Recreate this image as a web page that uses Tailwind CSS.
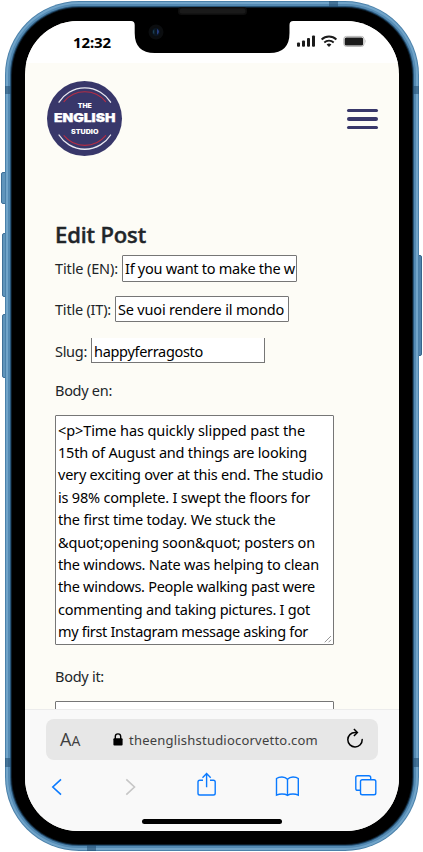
<!DOCTYPE html>
<html lang="en">
<head>
<meta charset="utf-8">
<meta name="viewport" content="width=device-width">
<title>Edit Post</title>
<script src="https://cdn.jsdelivr.net/npm/@tailwindcss/browser@4"></script>
</head>
<body class="bg-white w-[423px] h-[852px] overflow-hidden font-['Noto_Sans',sans-serif]">
<div class="relative w-[423px] h-[852px] pl-[5px] pt-px">
  <!-- side buttons -->
  <div class="absolute left-[1px] top-[172px] w-[6px] h-[32px] rounded-l-[2px] bg-[#5f94bb] border border-[#3f7098]"></div>
  <div class="absolute left-[2px] top-[233px] w-[5px] h-[64px] rounded-l-[2px] bg-[#5f94bb] border border-[#3f7098]"></div>
  <div class="absolute left-[2px] top-[314px] w-[5px] h-[64px] rounded-l-[2px] bg-[#5f94bb] border border-[#3f7098]"></div>
  <div class="absolute left-[417px] top-[255px] w-[5px] h-[101px] rounded-r-[2px] bg-[#4f83ac] border border-[#37658b]"></div>

  <!-- metal frame -->
  <div class="relative w-[414px] h-[850px] rounded-[74px] bg-[#4b81aa] p-px">
    <div class="w-full h-full rounded-[73px] bg-[#71a4c9] p-[2px]">
      <div class="w-full h-full rounded-[71px] bg-[#548ab3] p-[2px]">
        <div class="w-full h-full rounded-[69px] bg-[#29567a] p-px">
          <div class="w-full h-full rounded-[68px] bg-[#0b1b28] p-px">
            <div class="w-full h-full rounded-[67px] bg-black px-[13px] pt-[13px] pb-[13px]">
              <!-- screen -->
              <div class="w-[374px] h-[810px] rounded-[53px] overflow-hidden bg-[#fdfcf6] flex flex-col">
                <!-- status bar -->
                <header class="h-[42px] shrink-0 bg-white flex items-start pl-[48px]">
                  <span class="w-[38px] mt-[11px] text-[15px] leading-[20px] font-bold text-black whitespace-nowrap"><span class="fit" data-w="38">12:32</span></span>
                  <svg class="ml-[185px] mt-[13px] w-[71px] h-[14px] shrink-0" viewBox="0 0 71 14">
                    <g fill="#1b1b1b">
                      <rect x="1" y="8.5" width="3" height="4.2" rx="1"/>
                      <rect x="6" y="6.5" width="3" height="6.2" rx="1"/>
                      <rect x="11" y="4" width="3" height="8.7" rx="1"/>
                      <rect x="16" y="1.5" width="3" height="11.2" rx="1"/>
                      <path d="M30.6 10.4 L33 12.9 L35.4 10.4 Q33 8.5 30.6 10.4z"/>
                      <rect x="48.6" y="3.4" width="18.5" height="8" rx="1.5"/>
                    </g>
                    <g fill="none" stroke="#1b1b1b" stroke-width="1.8">
                      <path d="M25.6 5.5a10.6 10.6 0 0 1 14.8 0"/>
                      <path d="M28.3 8.5a6.8 6.8 0 0 1 9.4 0"/>
                    </g>
                    <rect x="47.8" y="2.4" width="20.2" height="10" rx="2.6" fill="none" stroke="#b5b5b5"/>
                    <path d="M69 5.3q1.5 2.1 0 4.2z" fill="#b5b5b5"/>
                  </svg>
                </header>

                <!-- page -->
                <main class="h-[646px] shrink-0 overflow-hidden">
                  <div class="flex justify-between pl-[22px] pr-[21px] pt-[18px]">
                    <svg class="w-[76px] h-[76px]" viewBox="0 0 76 76">
                      <circle cx="37.5" cy="37.5" r="37.5" fill="#38376a"/>
                      <g fill="none" stroke-linecap="round">
                        <path d="M12 21.200a30.500 30.500 0 0 1 51.600 0M12 54a30.500 30.500 0 0 0 51.600 0" stroke="#e9e9f1" stroke-width="1.300"/>
                        <path d="M17 20.600a27 27 0 0 1 41.600 0M17 54.600a27 27 0 0 0 41.600 0" stroke="#b52d44" stroke-width="1.100"/>
                      </g>
                      <g fill="#fff" font-family="Inter" font-weight="900" text-anchor="middle">
                        <text x="37.800" y="27" font-size="6.200" textLength="14" lengthAdjust="spacingAndGlyphs">THE</text>
                        <text x="37.700" y="41.200" font-size="11.600" stroke="#fff" stroke-width=".25" textLength="61.500" lengthAdjust="spacingAndGlyphs">ENGLISH</text>
                        <text x="37.700" y="52.600" font-size="6.200" textLength="27.500" lengthAdjust="spacingAndGlyphs">STUDIO</text>
                      </g>
                    </svg>
                    <div class="mt-[27.500px] w-[31px] flex flex-col gap-[5px]">
                      <div class="h-[3.500px] rounded-full bg-[#38376a]"></div>
                      <div class="h-[3.500px] rounded-full bg-[#38376a]"></div>
                      <div class="h-[3.500px] rounded-full bg-[#38376a]"></div>
                    </div>
                  </div>

                  <div class="pl-[30px] pt-[62px] text-[14.500px] text-[#212529]">
                    <h1 class="h-[36px] text-[22px] leading-[30px] font-medium whitespace-nowrap [-webkit-text-stroke:0.5px_#212529]"><span class="fit" data-w="91">Edit Post</span></h1>
                    <div class="flex h-[41px] whitespace-nowrap">
                      <span class="w-[67px] leading-[27px]"><span class="fit" data-w="63">Title (EN):</span></span>
                      <div class="w-[175px] h-[27px] border border-[#767676] rounded-[1px] bg-white text-black px-[2px] leading-[25px]"><span class="fit" data-w="170">If you want to make the w</span></div>
                    </div>
                    <div class="flex h-[42px] whitespace-nowrap">
                      <span class="w-[60px] leading-[27px]"><span class="fit" data-w="56">Title (IT):</span></span>
                      <div class="w-[174px] h-[26px] border border-[#767676] rounded-[1px] bg-white text-black px-[2px] leading-[25px]"><span class="fit" data-w="166">Se vuoi rendere il mondo</span></div>
                    </div>
                    <div class="flex h-[38px] whitespace-nowrap">
                      <span class="w-[36px] leading-[27px]"><span class="fit" data-w="32">Slug:</span></span>
                      <div class="w-[174px] h-[25px] border border-t-0 border-[#767676] bg-white text-black px-[2px] leading-[27px]"><span class="fit" data-w="109">happyferragosto</span></div>
                    </div>
                    <div class="h-[39px] leading-[29px]"><span class="fit" data-w="57">Body en:</span></div>
                    <div class="relative w-[279px] h-[230px] border border-[#767676] rounded-[1px] bg-white text-black pl-[2px] pt-[2.500px] leading-[22.400px] whitespace-nowrap">
                      <div><span class="fit" data-w="247">&lt;p&gt;Time has quickly slipped past the</span></div>
                      <div><span class="fit" data-w="249">15th of August and things are looking</span></div>
                      <div><span class="fit" data-w="265">very exciting over at this end. The studio</span></div>
                      <div><span class="fit" data-w="252">is 98% complete. I swept the floors for</span></div>
                      <div><span class="fit" data-w="217.500">the first time today. We stuck the</span></div>
                      <div><span class="fit" data-w="257">&amp;quot;opening soon&amp;quot; posters on</span></div>
                      <div><span class="fit" data-w="261">the windows. Nate was helping to clean</span></div>
                      <div><span class="fit" data-w="257">the windows. People walking past were</span></div>
                      <div><span class="fit" data-w="252">commenting and taking pictures. I got</span></div>
                      <div><span class="fit" data-w="250">my first Instagram message asking for</span></div>
                      <svg class="absolute right-[1px] bottom-[1px] w-[8px] h-[8px]" viewBox="0 0 8 8" fill="none" stroke="#8a8a8a" stroke-width=".9"><path d="M.7 7.300L7 1M4.500 7.300L7 4.800"/></svg>
                    </div>
                    <div class="h-[56px] pt-[17px] leading-[28px]"><span class="fit" data-w="49">Body it:</span></div>
                    <div class="w-[279px] h-[230px] border border-[#767676] rounded-[1px] bg-white"></div>
                  </div>
                </main>

                <!-- browser toolbar -->
                <footer class="h-[122px] shrink-0 border-t border-[#ececec] bg-[#f9f9f9] pt-[9px] flex flex-col items-center">
                  <div class="w-[332px] h-[41px] rounded-[8px] bg-[#e7e7e7] flex items-center pl-[14px] text-[#3f3f3f]">
                    <div class="w-[53px] flex items-baseline leading-[41px] font-['Open_Sans',sans-serif]"><span class="text-[18px]">A</span><span class="text-[14px]">A</span></div>
                    <svg class="w-[10px] h-[13px]" viewBox="0 0 10 13"><rect x=".4" y="5.200" width="9.200" height="7.400" rx="1" fill="#000"/><path d="M2.300 6V3.600a2.700 2.700 0 0 1 5.400 0V6" fill="none" stroke="#000" stroke-width="1.400"/></svg>
                    <span class="ml-[6px] w-[217px] pt-[2px] text-[13px] text-[#404040] whitespace-nowrap"><span class="fit" data-w="189">theenglishstudiocorvetto.com</span></span>
                    <svg class="w-[18px] h-[20px] mb-[3px] shrink-0" viewBox="0 0 18 20" fill="none" stroke="#000" stroke-width="1.500"><path d="M10.500 4.500H9A7.200 7.200 0 1 0 16.200 11.500" stroke-linecap="round"/><path d="M7.900.9L11.400 4.500L7.900 8"/></svg>
                  </div>
                  <svg class="w-[374px] h-[46px] shrink-0" viewBox="25 760 374 46" fill="none" stroke="#0a7aff" stroke-width="1.400">
                    <path d="M61 779.300L52.800 787L61 794.700" stroke-width="1.600"/>
                    <path d="M126.300 779.300L134.500 787L126.300 794.700" stroke="#c6c6c6" stroke-width="1.600"/>
                    <path d="M203 780.200H199.800Q198 780.200 198 782V793.200Q198 795 199.800 795H213.400Q215.200 795 215.200 793.200V782Q215.200 780.200 213.400 780.200H210M206.600 787.300V773.800M202.500 777.700L206.600 773.600L210.700 777.700"/>
                    <path d="M287.500 779.300Q285.500 777 282 777Q278.500 777 276.500 778.500V795.200Q279 794 282 794Q285.500 794 287.500 795.300Q289.500 794 293 794Q296 794 298.300 795.200V778.500Q296.500 777 293 777Q289.500 777 287.500 779.300V795.300"/>
                    <path d="M360.300 790.300H357.700Q355.800 790.300 355.800 788.400V777.600Q355.800 775.700 357.700 775.700H368.800Q370.700 775.700 370.700 777.600V779.600"/>
                    <rect x="360.500" y="779.800" width="15.300" height="15" rx="1.800"/>
                  </svg>
                  <div class="mt-[12.500px] w-[140px] h-[5px] rounded-full bg-black"></div>
                </footer>
              </div>
            </div>
          </div>
        </div>
      </div>
    </div>
  </div>

  <!-- antenna bands, notch, camera and speaker -->
  <svg class="absolute left-0 top-0 w-[423px] h-[852px]" viewBox="0 0 423 852">
    <g fill="#204b6e" fill-opacity=".55">
      <rect x="5" y="86" width="6" height="8"/><rect x="413" y="86" width="6" height="8"/>
      <rect x="5" y="758" width="6" height="9"/><rect x="413" y="758" width="6" height="9"/>
      <rect x="329" y="1" width="9" height="6"/><rect x="87" y="845" width="9" height="6"/>
    </g>
    <path d="M131 20V21Q134.700 21 134.700 25V33Q134.700 53 154.700 53H269.500Q289.500 53 289.500 33V25Q289.500 21 293.200 21V20z" fill="#000"/>
    <rect x="178" y="7" width="69" height="8" rx="3.500" fill="#0e0e0e"/>
    <rect x="179.500" y="8.500" width="66" height="5" rx="2.500" fill="#1a1a1a"/>
    <circle cx="156" cy="32" r="7.500" fill="#0b0d0f"/>
    <circle cx="156" cy="32" r="4.200" fill="#0a141f"/>
    <path d="M154.300 29.300q-3 2.700 0 5.200z" fill="#1c4054"/>
    <path d="M157 28.800q4 3 0 6z" fill="#263d80"/>
  </svg>
</div>
<script>
  // Spread each label over its column width by adjusting the tracking.
  function fitLabels() {
    document.querySelectorAll('.fit').forEach(function (el) {
      el.style.letterSpacing = '0px';
      var natural = el.getBoundingClientRect().width;
      var target = parseFloat(el.dataset.w);
      el.style.letterSpacing = ((target - natural) / el.textContent.length) + 'px';
    });
  }
  fitLabels();
  window.addEventListener('load', function () {
    fitLabels();
    requestAnimationFrame(fitLabels);
    document.fonts.ready.then(fitLabels);
    setTimeout(fitLabels, 60);
  });
  new ResizeObserver(fitLabels).observe(document.body);
</script>
</body>
</html>
